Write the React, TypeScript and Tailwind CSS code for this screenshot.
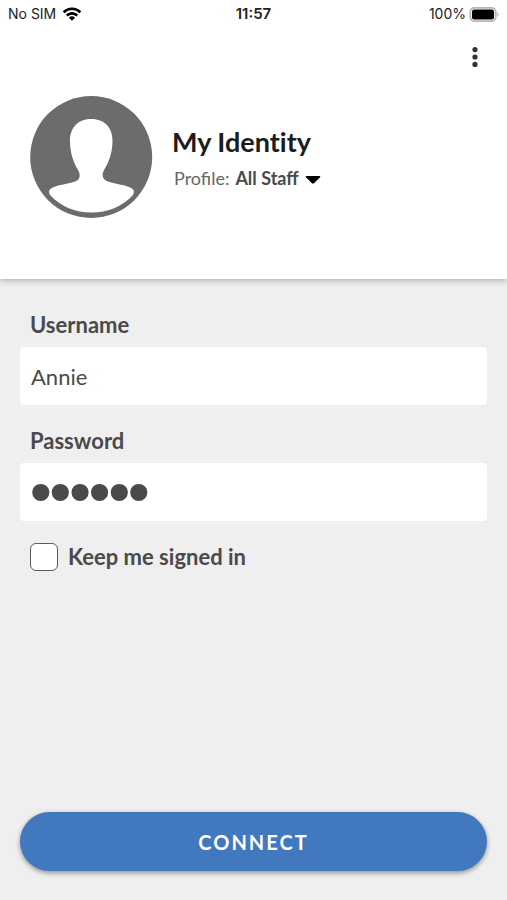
import React, { useState } from 'react';

const profiles = ['All Staff', 'Students', 'Guests'];

const StatusBar: React.FC = () => (
  <div className="grid h-7 grid-cols-3 items-center px-2 font-['Inter','Liberation_Sans',sans-serif] text-sm text-[#222222]">
    <div className="flex items-center gap-1.5">
      <span>No SIM</span>
      <svg width="20" height="14" viewBox="0 0 20 14" fill="none" stroke="#000000" strokeWidth="2.6" aria-label="Wi-Fi">
        <path d="M1.6 5.2a12 12 0 0 1 16.8 0" />
        <path d="M4.8 8.5a7.4 7.4 0 0 1 10.4 0" />
        <path d="M10 13.8 6.9 10.7a4.5 4.5 0 0 1 6.2 0z" fill="#000000" stroke="none" />
      </svg>
    </div>
    <span className="text-center text-[15px] font-semibold">11:57</span>
    <div className="flex items-center justify-end gap-[3px]">
      <span>100%</span>
      <svg width="30" height="15" viewBox="0 0 30 15" aria-label="Battery">
        <rect x="1.3" y="0.9" width="25.4" height="13.2" rx="4" fill="#ffffff" stroke="#b5b5b5" strokeWidth="1.8" />
        <rect x="3" y="2.5" width="22" height="10" rx="2.2" fill="#000000" />
        <path d="M28.2 5.200a2.600 2.600 0 0 1 0 4.600z" fill="#b5b5b5" />
      </svg>
    </div>
  </div>
);

const Avatar: React.FC = () => (
  <svg width="123" height="123" viewBox="0 0 123 123" className="shrink-0" aria-hidden="true">
    <circle cx="61.2" cy="61" r="61" fill="#6c6c6c" />
    <path
      d="M61 23C47 23 39.500 33 40 46C40.300 58 43.500 66 48 74C51 79.500 50 83.500 45 85.500C37 88.500 27 88.500 21 92.500C18.500 94 18.500 97 20.500 99.500C31 110.500 45 116.500 61.500 116.500C78 116.500 92 110.500 102.500 99.500C104.500 97 104.500 94 102 92.500C96 88.500 86 88.500 78 85.500C73 83.500 71 80 74 74C79 66 82 58 82.500 46C83 32.500 75.500 23 61 23Z"
      fill="#ffffff"
    />
  </svg>
);

export default function App() {
  const [profile, setProfile] = useState(profiles[0]);
  const [username, setUsername] = useState('Annie');
  const [password, setPassword] = useState('secret');
  const [keep, setKeep] = useState(false);

  return (
    <div className="flex min-h-screen flex-col bg-[#efefef] font-['Lato','Liberation_Sans',sans-serif] text-[#4a4a4a]">
      <header className="bg-white pb-15 shadow-[0_1px_7px_rgba(0,0,0,0.32)]">
        <StatusBar />
        <div className="flex h-[68px] items-start justify-end px-5 pt-[15px]">
          <button type="button" aria-label="More options" className="flex w-6 justify-center py-1">
            <svg width="6" height="20" viewBox="0 0 6 20" fill="#333333">
              <circle cx="3" cy="2.600" r="2.600" />
              <circle cx="3" cy="10" r="2.600" />
              <circle cx="3" cy="17.400" r="2.600" />
            </svg>
          </button>
        </div>
        <div className="flex items-center gap-[19px] px-[30px]">
          <Avatar />
          <div className="pt-0.5">
            <h1 className="text-[27px] leading-9 font-bold text-[#1c1c1c] [font-variant-ligatures:none]">My Identity</h1>
            <div className="flex items-center gap-1.5 pt-0.5 pl-0.5 text-lg leading-8">
              <label htmlFor="profile" className="text-[#666666]">Profile:</label>
              <div className="relative">
                <select
                  id="profile"
                  value={profile}
                  onChange={(e) => setProfile(e.target.value)}
                  className="field-sizing-content appearance-none bg-transparent pr-[22px] font-bold"
                >
                  {profiles.map((p) => (
                    <option key={p}>{p}</option>
                  ))}
                </select>
                <svg width="16" height="8" viewBox="0 0 16 8" className="pointer-events-none absolute top-3.5 right-0">
                  <path d="M1.500 0h13q1.500 0 .5 1.200L9 7.300q-1 .8-2 0L1 1.200Q0 0 1.500 0z" fill="#000000" />
                </svg>
              </div>
            </div>
          </div>
        </div>
      </header>

      <form className="flex grow flex-col px-5 pt-[30px] pb-[29px]" onSubmit={(e) => e.preventDefault()}>
        <label htmlFor="username" className="px-2.5 pb-1.5 text-[22px] leading-8 font-bold">Username</label>
        <input
          id="username"
          type="text"
          value={username}
          onChange={(e) => setUsername(e.target.value)}
          className="h-[58px] w-full rounded bg-white px-[11px] text-[22px]"
        />
        <label htmlFor="password" className="px-2.5 pt-5 pb-1.5 text-[22px] leading-8 font-bold">Password</label>
        <input
          id="password"
          type="password"
          value={password}
          onChange={(e) => setPassword(e.target.value)}
          className="h-[58px] w-full rounded bg-white px-[11px] font-['Liberation_Sans',sans-serif] text-[56px] leading-[58px] [-webkit-text-stroke:2px_#4a4a4a]"
        />
        <label className="mt-5 flex items-center gap-2.5 px-2.5 text-[22px] leading-8 font-bold">
          <input
            type="checkbox"
            checked={keep}
            onChange={(e) => setKeep(e.target.checked)}
            className="size-7 appearance-none rounded-md border border-[#5a5a5a] bg-white checked:bg-[#4178be]"
          />
          Keep me signed in
        </label>
        <button
          type="submit"
          className="mt-auto h-[59px] w-full rounded-full bg-[#4178be] text-xl font-bold tracking-widest text-white shadow-[0_2px_5px_rgba(0,0,0,0.4)]"
        >
          CONNECT
        </button>
      </form>
    </div>
  );
}
